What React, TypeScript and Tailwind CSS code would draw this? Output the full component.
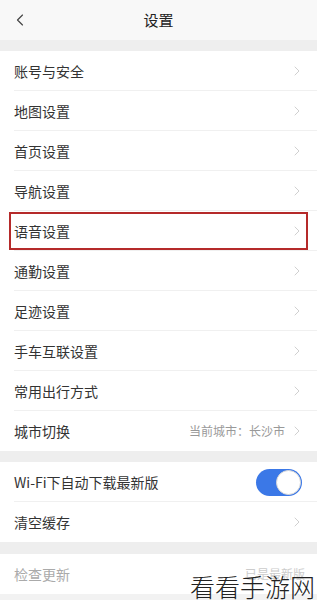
import { ChevronLeft, ChevronRight } from "lucide-react";

const rows = [
  { label: "账号与安全" },
  { label: "地图设置" },
  { label: "首页设置" },
  { label: "导航设置" },
  { label: "语音设置", marked: true },
  { label: "通勤设置" },
  { label: "足迹设置" },
  { label: "手车互联设置" },
  { label: "常用出行方式" },
  { label: "城市切换", value: "当前城市：长沙市" },
];

const font = { fontFamily: '"Noto Sans CJK SC", "Noto Sans", sans-serif' };

function Row({
  label,
  value,
  marked,
  last,
}: {
  label: string;
  value?: string;
  marked?: boolean;
  last?: boolean;
}) {
  return (
    <div className="relative flex h-10 items-center bg-white pl-[14px] pr-[12px]">
      <span className="flex-1 text-[14px] text-[#333]">{label}</span>
      {value && <span className="mr-1 text-[12px] text-[#999]">{value}</span>}
      <ChevronRight size={16} strokeWidth={1.2} className="text-[#c4c4c4]" />
      {!last && <div className="absolute bottom-0 left-[14px] right-0 h-px bg-[#f0f0f0]" />}
      {marked && (
        <div className="absolute inset-x-[9px] inset-y-[1px] border-2 border-[#b52a2a]" />
      )}
    </div>
  );
}

export default function App() {
  return (
    <div className="relative h-[600px] w-[317px] overflow-hidden bg-[#f2f2f2]" style={font}>
      {/* header */}
      <div className="relative flex h-10 items-center justify-center bg-[#f8f8f8]">
        <ChevronLeft size={20} strokeWidth={1.4} className="absolute left-[10px] text-[#444]" />
        <span className="text-[15px] text-[#222]">设置</span>
      </div>
      <div className="h-[11px] bg-[#eeeeee]" />

      <div className="bg-white">
        {rows.map((r, i) => (
          <Row key={r.label} {...r} last={i === rows.length - 1} />
        ))}
      </div>

      <div className="h-[11px] bg-[#eeeeee]" />

      <div className="bg-white">
        <div className="relative flex h-10 items-center pl-[14px] pr-[15px]">
          <span className="flex-1 text-[14px] text-[#333]">Wi-Fi下自动下载最新版</span>
          <div className="flex h-[27px] w-[46px] items-center justify-end rounded-full bg-[#3b78e7] pr-[1px]">
            <div className="h-[25px] w-[25px] rounded-full border border-[#d8d8d8] bg-white" />
          </div>
          <div className="absolute bottom-0 left-[14px] right-0 h-px bg-[#f0f0f0]" />
        </div>
        <Row label="清空缓存" last />
      </div>

      <div className="h-[12px] bg-[#eeeeee]" />

      <div className="flex h-10 items-center bg-white pl-[14px] pr-[12px]">
        <span className="flex-1 text-[14px] text-[#aaa]">检查更新</span>
        <span className="text-[12px] text-[#ccc]">已是最新版</span>
      </div>

      {/* watermark */}
      <div className="absolute bottom-[1px] right-[2px] text-[25px] font-light leading-none text-[#222]">
        看看手游网
      </div>
    </div>
  );
}
